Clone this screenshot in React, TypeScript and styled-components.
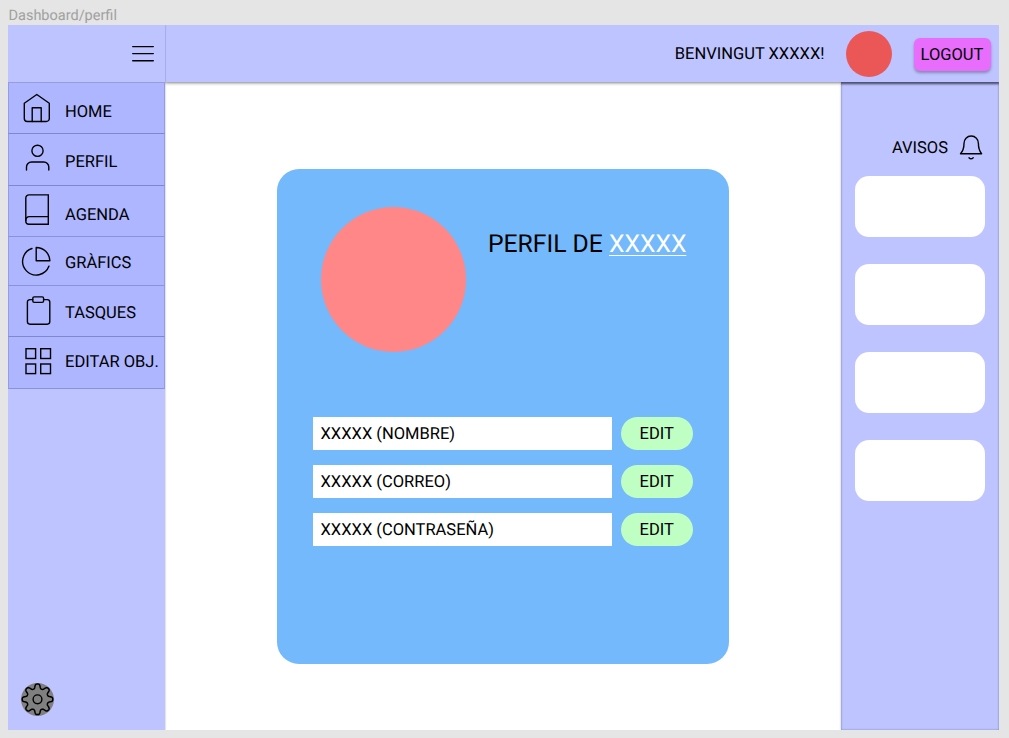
import React from "react";
import styled, { createGlobalStyle } from "styled-components";

const GlobalStyle = createGlobalStyle`
  * { box-sizing: border-box; }
  body { margin: 0; background: #e5e5e5; font-family: Roboto, "Liberation Sans", sans-serif; font-size: 16.5px; color: #000; text-rendering: geometricPrecision; }
  button { font: inherit; color: inherit; border: 0; padding: 0; }
  svg { display: block; flex: none; }
`;

const Page = styled.div`
  width: 1009px;
  height: 738px;
  padding: 0 10px 8px 8px;
  display: flex;
  flex-direction: column;
  overflow: hidden;
`;

const FrameLabel = styled.div`
  height: 25px;
  padding: 7px 0 0 0.5px;
  font-size: 14.5px;
  line-height: 17px;
  color: #a0a0a0;
`;

const Frame = styled.div`
  width: 991px;
  height: 705px;
  display: grid;
  grid-template-columns: 157px 1fr;
  background: #fff;
  overflow: hidden;
`;

const Sidebar = styled.aside`
  display: flex;
  flex-direction: column;
  background: #bec4ff;
  box-shadow: 0 0 1.5px rgba(0, 0, 0, 0.4);
  z-index: 2;
`;

const MenuBar = styled.div`
  height: 57px;
  padding: 20px 11px 0 0;
  display: flex;
  justify-content: flex-end;
`;

const NavList = styled.nav`
  display: flex;
  flex-direction: column;
`;

const NavItem = styled.a<{ $height: number; $heavy?: boolean }>`
  height: ${(p) => p.$height}px;
  display: flex;
  align-items: flex-start;
  background: #aeb6ff;
  border: 1px solid #959ce4;
  border-top: 0;
  border-bottom: 1px solid ${(p) => (p.$heavy ? "#7f87cf" : "#8a92da")};
  padding-left: 10px;

  &:first-child {
    box-shadow: inset 0 1px 0 #959ce4;
  }
`;

const IconSlot = styled.span<{ $top: number }>`
  width: 46px;
  padding-top: ${(p) => p.$top}px;
`;

const NavLabel = styled.span<{ $top: number }>`
  padding-top: ${(p) => p.$top}px;
  line-height: 20px;
  white-space: nowrap;
`;

const Settings = styled.button`
  width: 33px;
  height: 33px;
  margin: auto 0 14px 13px;
  border-radius: 50%;
  background: #808080;
`;

const Workspace = styled.div`
  display: flex;
  flex-direction: column;
  min-width: 0;
`;

const Header = styled.header`
  height: 57px;
  flex: none;
  display: flex;
  align-items: center;
  justify-content: flex-end;
  padding-right: 8.5px;
  background: #bec4ff;
  box-shadow: 0 1px 3px rgba(0, 0, 0, 0.5);
  z-index: 1;
`;

const Welcome = styled.span`
  line-height: 20px;
  margin: 2px 21.5px 0 0;
`;

const Avatar = styled.div`
  width: 46px;
  height: 46px;
  border-radius: 50%;
  background: #eb5757;
`;

const Logout = styled.button`
  width: 77px;
  height: 33px;
  margin: 1px 0 0 21.5px;
  border-radius: 6px;
  background: #e86dfd;
  box-shadow: 0 2px 3px rgba(0, 0, 0, 0.3);
`;

const Body = styled.div`
  flex: 1;
  display: grid;
  grid-template-columns: 1fr 158px;
`;

const Main = styled.main`
  padding: 87px 0 0 112px;
`;

const Card = styled.section`
  width: 452px;
  height: 494.5px;
  padding: 38px 36px 0 36px;
  border-radius: 22px;
  background: #74b9fb;
`;

const ProfileHead = styled.div`
  display: flex;
  gap: 22px;
  padding-left: 8px;
`;

const Portrait = styled.div`
  width: 145px;
  height: 145px;
  border-radius: 50%;
  background: #ff8787;
`;

const Title = styled.h1`
  margin: 23px 0 0;
  font-size: 24.7px;
  font-weight: 400;
  line-height: 30px;
  white-space: nowrap;
`;

const Name = styled.span`
  color: #fff;
  text-decoration: underline;
  text-decoration-thickness: 1.3px;
  text-underline-offset: 2.5px;
`;

const Fields = styled.div`
  display: flex;
  flex-direction: column;
  gap: 15px;
  margin-top: 65px;
`;

const FieldRow = styled.div`
  height: 33px;
  display: flex;
  gap: 9px;
`;

const Field = styled.div`
  width: 299px;
  padding: 1px 0 0 7.5px;
  background: #fff;
  line-height: 34px;
`;

const EditButton = styled.button`
  width: 71.5px;
  border-radius: 17px;
  background: #bfffc4;
`;

const Notices = styled.aside`
  display: flex;
  flex-direction: column;
  gap: 27px;
  padding: 52px 14px 0;
  background: #bec4ff;
  box-shadow: inset 0 0 2px rgba(60, 65, 120, 0.55), inset 0 3px 1.5px -0.5px #8085b5, 0 0 2px rgba(0, 0, 0, 0.25);
`;

const NoticesTitle = styled.div`
  display: flex;
  justify-content: flex-end;
  gap: 11px;
  padding-right: 2px;
  height: 42px;
  margin-bottom: -27px;
  line-height: 29px;
`;

const Notice = styled.div`
  height: 61px;
  flex: none;
  border-radius: 14px;
  background: #fff;
`;

const Icon = ({ size = 36, children }: { size?: number; children: React.ReactNode }) => (
  <svg width={size} height={size} viewBox={`0 0 ${size} ${size}`} fill="none" stroke="#000" strokeWidth="1.4" strokeLinecap="round" strokeLinejoin="round">
    {children}
  </svg>
);

const items = [
  {
    label: "HOME", height: 52, heavy: true, icon: 8, text: 21,
    art: (<><path d="M17.8 4.5 5.3 13.2V28.5a3 3 0 0 0 3 3H27.3a3 3 0 0 0 3-3V13.2Z" /><path d="M13.2 31.5V17.8h9v13.7" /></>),
  },
  {
    label: "PERFIL", height: 52, heavy: true, icon: 6, text: 19,
    art: (<><circle cx="18.5" cy="10.8" r="5.6" /><path d="M7.5 30v-3a5 5 0 0 1 5-5h12.3a5 5 0 0 1 5 5v3" /></>),
  },
  {
    label: "AGENDA", height: 51, icon: 6, text: 20,
    art: (<><path d="M29.3 2.9H10a3.2 3.2 0 0 0-3.2 3.2V29a3.2 3.2 0 0 0 3.2 3.2H29.3Z" strokeLinejoin="miter" /><path d="M6.8 28.5a3.5 3.5 0 0 1 3.5-3.9h19" /></>),
  },
  {
    label: "GRÀFICS", height: 49, icon: 6, text: 17,
    art: (<><path d="M17.2 4.5V17.7H30.9A13.8 13.8 0 0 0 17.2 4.5Z" /><path d="M13 5.5A13.6 13.6 0 1 0 30 23.1" /></>),
  },
  {
    label: "TASQUES", height: 51, heavy: true, icon: 7, text: 18,
    art: (<><path d="M13.7 6.6H11a2.6 2.6 0 0 0-2.6 2.6v19.4A2.6 2.6 0 0 0 11 31.2h17.2a2.6 2.6 0 0 0 2.6-2.6V9.2a2.6 2.6 0 0 0-2.6-2.6h-3.5" /><rect x="13.8" y="3.9" width="10.8" height="5.5" rx="1.4" /></>),
  },
  {
    label: "EDITAR OBJ.", height: 52, icon: 6, text: 16,
    art: (<g strokeLinejoin="miter"><rect x="7" y="5.7" width="9.6" height="9.8" /><rect x="21.7" y="5.7" width="9.8" height="9.8" /><rect x="7" y="21" width="9.6" height="9.6" /><rect x="21.7" y="21" width="9.8" height="9.6" /></g>),
  },
];

const gearPath =
  Array.from({ length: 192 }, (_, i) => {
    const a = (i / 192) * Math.PI * 2;
    const r = 13.1 + (2.2 * Math.tanh(1.7 * Math.cos(8 * a))) / Math.tanh(1.7);
    return `${i ? "L" : "M"}${(16.5 + r * Math.cos(a)).toFixed(2)} ${(16.3 + r * Math.sin(a)).toFixed(2)}`;
  }).join("") + "Z";

export default function App() {
  return (
    <>
      <GlobalStyle />
      <Page>
        <FrameLabel>Dashboard/perfil</FrameLabel>
        <Frame>
          <Sidebar>
            <MenuBar>
              <svg width="22" height="18" fill="none" stroke="#000" strokeWidth="1.4" strokeLinecap="round">
                <path d="M.7 1.6h20.6M.7 8.6h20.6M.7 15.7h20.6" />
              </svg>
            </MenuBar>
            <NavList>
              {items.map((it) => (
                <NavItem key={it.label} $height={it.height} $heavy={it.heavy}>
                  <IconSlot $top={it.icon}><Icon>{it.art}</Icon></IconSlot>
                  <NavLabel $top={it.text}>{it.label}</NavLabel>
                </NavItem>
              ))}
            </NavList>
            <Settings aria-label="Configuració">
              <Icon size={33}>
                <path d={gearPath} strokeWidth="1.5" />
                <circle cx="16.5" cy="16.3" r="4.4" />
              </Icon>
            </Settings>
          </Sidebar>
          <Workspace>
            <Header>
              <Welcome>BENVINGUT XXXXX!</Welcome>
              <Avatar />
              <Logout>LOGOUT</Logout>
            </Header>
            <Body>
              <Main>
                <Card>
                  <ProfileHead>
                    <Portrait />
                    <Title>PERFIL DE <Name>XXXXX</Name></Title>
                  </ProfileHead>
                  <Fields>
                    {["NOMBRE", "CORREO", "CONTRASEÑA"].map((f) => (
                      <FieldRow key={f}>
                        <Field>XXXXX ({f})</Field>
                        <EditButton>EDIT</EditButton>
                      </FieldRow>
                    ))}
                  </Fields>
                </Card>
              </Main>
              <Notices>
                <NoticesTitle>
                  AVISOS
                  <svg width="24" height="27" fill="none" stroke="#000" strokeWidth="1.4" strokeLinecap="round" strokeLinejoin="round">
                    <path d="M1.5 19.7C4.5 16.5 5 13.5 5 9.5A7.2 7.2 0 0 1 12.2 2a7.2 7.2 0 0 1 7.2 7.5c0 4 .5 7 3.2 10.2Z" />
                    <path d="M10 23.7q2 2.2 4.2 0" />
                  </svg>
                </NoticesTitle>
                <Notice />
                <Notice />
                <Notice />
                <Notice />
              </Notices>
            </Body>
          </Workspace>
        </Frame>
      </Page>
    </>
  );
}
